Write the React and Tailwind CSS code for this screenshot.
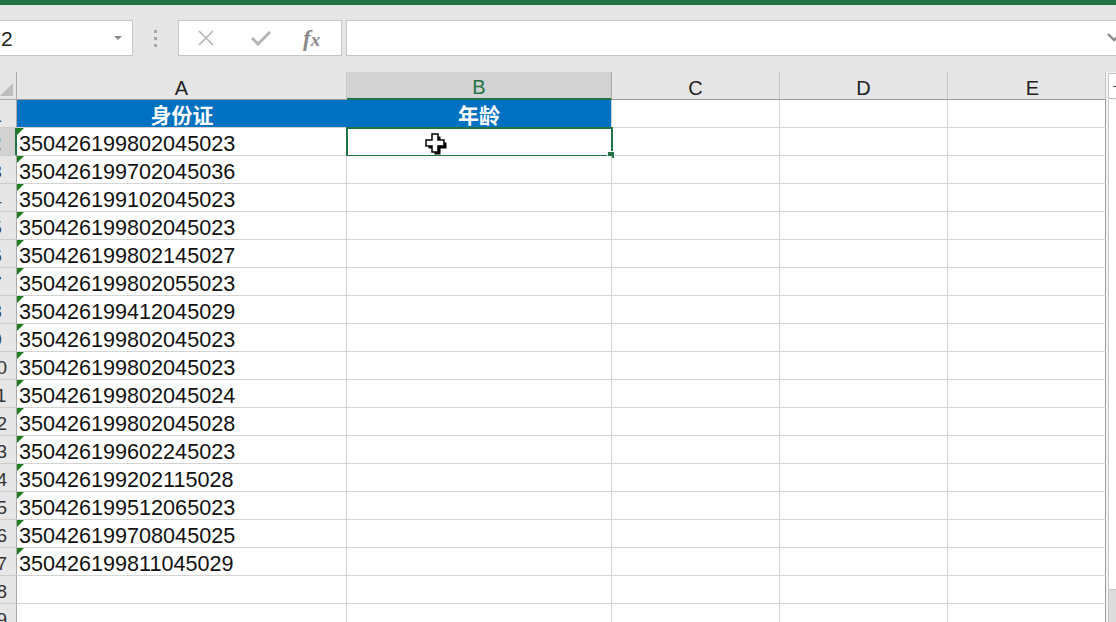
import React from 'react';

const ids = [
  '350426199802045023',
  '350426199702045036',
  '350426199102045023',
  '350426199802045023',
  '350426199802145027',
  '350426199802055023',
  '350426199412045029',
  '350426199802045023',
  '350426199802045023',
  '350426199802045024',
  '350426199802045028',
  '350426199602245023',
  '350426199202115028',
  '350426199512065023',
  '350426199708045025',
  '350426199811045029',
];

const sans = "font-['Liberation_Sans',Arial,sans-serif]";
const cjk = "font-['Noto_Sans_CJK_SC','Liberation_Sans',sans-serif]";

function FormulaBar() {
  return (
    <div className="flex h-[36px] mt-[15px] items-stretch">
      <div className="-ml-[24px] w-[157px] bg-white border border-[#c6c6c6] flex items-center justify-between pl-[10px] pr-[10px]">
        <span className={`${sans} text-[21px] leading-none text-[#222]`}>B2</span>
        <svg width="8" height="5" viewBox="0 0 8 5">
          <path d="M0 0h8L4 4z" fill="#8a8a8a" />
        </svg>
      </div>
      <div className="w-[45px] flex flex-col items-center justify-center gap-[4px]">
        <span className="w-[3px] h-[3px] bg-[#a6a6a6]" />
        <span className="w-[3px] h-[3px] bg-[#a6a6a6]" />
        <span className="w-[3px] h-[3px] bg-[#a6a6a6]" />
      </div>
      <div className="w-[164px] bg-white border border-[#c6c6c6] flex items-center pl-[18px] gap-[36px]">
        <svg width="18" height="18" viewBox="0 0 18 18">
          <path d="M2 2l14 14M16 2L2 16" stroke="#b4b4b4" strokeWidth="1.6" />
        </svg>
        <svg width="20" height="16" viewBox="0 0 20 16">
          <path d="M1 8l6 6L19 2" stroke="#b4b4b4" strokeWidth="3" fill="none" />
        </svg>
        <span className="font-['Liberation_Serif',serif] italic font-bold text-[23px] leading-none text-[#8a8a8a] -ml-[4px]">
          f<span className="text-[19px]">x</span>
        </span>
      </div>
      <div className="ml-[4px] flex-1 -mr-[20px] bg-white border border-[#c6c6c6] relative">
        <svg className="absolute left-[760px] top-[12px]" width="14" height="9" viewBox="0 0 14 9">
          <path d="M1 1l6 6 6-6" stroke="#8a8a8a" strokeWidth="2.4" fill="none" />
        </svg>
      </div>
    </div>
  );
}

const cols = [
  { key: 'A', w: 'w-[330px]' },
  { key: 'B', w: 'w-[265px]' },
  { key: 'C', w: 'w-[168px]' },
  { key: 'D', w: 'w-[168px]' },
  { key: 'E', w: 'w-[158px] pl-[12px]' },
];

function HeaderRow() {
  return (
    <div className="flex h-[28px]">
      <div className="w-[41px] h-[28px] border-r border-b border-[#ababab] bg-[#e6e6e6] flex items-end justify-end">
        <svg width="13" height="13" viewBox="0 0 13 13" className="mb-[3px] mr-[3px]">
          <path d="M13 0V13H0z" fill="#bdbdbd" />
        </svg>
      </div>
      {cols.map((c) =>
        c.key === 'B' ? (
          <div
            key={c.key}
            className={`${c.w} h-[28px] bg-[#d2d2d2] border-r border-[#ababab] border-b-2 border-b-[#217346] flex items-end justify-center ${sans} text-[20px] leading-[21px] text-[#217346]`}
          >
            B
          </div>
        ) : (
          <div
            key={c.key}
            className={`${c.w} h-[28px] border-r border-b border-r-[#c6c6c6] border-b-[#9b9b9b] flex items-end justify-center ${sans} text-[20px] leading-[22px] text-[#222] ${c.key === 'E' ? 'border-r-[#9b9b9b]' : ''}`}
          >
            {c.key}
          </div>
        )
      )}
    </div>
  );
}

function RowHead({ n, selected }) {
  return (
    <div
      className={`w-[41px] h-[28px] border-b border-[#cdcdcd] flex items-end justify-center ${sans} text-[19px] leading-[23px] text-[#333] ${
        selected ? 'bg-[#d2d2d2] border-r-2 border-r-[#217346]' : 'bg-[#e6e6e6] border-r border-r-[#ababab]'
      }`}
    >
      <span className="pl-[1px]">{n}</span>
    </div>
  );
}

const cell = 'h-[28px] border-r border-b border-[#d4d4d4] bg-white';

function DataRow({ n, value }) {
  return (
    <div className="flex h-[28px]">
      <RowHead n={n} selected={n === 2} />
      <div className={`w-[330px] ${cell} relative pl-[2px] pt-[2px] ${sans} text-[21.6px] leading-[27px] text-[#111] whitespace-nowrap`}>
        {value && (
          <span className="absolute left-0 top-0 w-0 h-0 border-t-[7px] border-r-[7px] border-t-[#1b7a1b] border-r-transparent" />
        )}
        {value}
      </div>
      <div className={`w-[265px] ${cell} relative`}>
        {n === 2 && (
          <>
            <div className="absolute -left-[1px] -top-[1px] w-[267px] h-[30px] border-2 border-[#217346]" />
            <div className="absolute -right-[4px] -bottom-[4px] w-[6px] h-[6px] bg-[#217346] border border-white box-content" />
          </>
        )}
      </div>
      <div className={`w-[168px] ${cell}`} />
      <div className={`w-[168px] ${cell}`} />
      <div className={`w-[158px] ${cell} border-r-[#9b9b9b]`} />
    </div>
  );
}

function TitleRow() {
  return (
    <div className="flex h-[28px]">
      <RowHead n={1} />
      <div className={`w-[330px] h-[28px] border-b border-[#d4d4d4] bg-[#0070c0] flex items-end justify-center ${cjk} font-bold text-[21px] leading-[26px] text-white`}>
        身份证
      </div>
      <div className={`w-[265px] h-[28px] border-r border-b border-[#d4d4d4] bg-[#0070c0] flex items-end justify-center ${cjk} font-bold text-[21px] leading-[26px] text-white`}>
        年龄
      </div>
      <div className={`w-[168px] ${cell}`} />
      <div className={`w-[168px] ${cell}`} />
      <div className={`w-[158px] ${cell} border-r-[#9b9b9b]`} />
    </div>
  );
}

function ScrollStrip() {
  return (
    <div className="w-[12px] flex flex-col pl-[2px] bg-[#f3f3f3]">
      <div className="h-[26px] mt-[1px] bg-white border border-[#c6c6c6] flex items-center pl-[4px]">
        <span className="w-[6px] h-[1px] bg-[#555]" />
      </div>
      <div className="flex-1 bg-white border-l border-[#c6c6c6] mt-[1px] flex flex-col justify-end">
        <div className="h-[33px] bg-[#dcdcdc] border-t border-[#c6c6c6]" />
      </div>
    </div>
  );
}

export default function App() {
  return (
    <div className={`w-[1116px] h-[622px] overflow-hidden bg-[#e6e6e6] relative ${sans}`}>
      <div className="h-[5px] bg-[#217346]" />
      <FormulaBar />
      <div className="flex mt-[16px] h-[550px]">
        <div className="-ml-[24px] flex flex-col">
          <HeaderRow />
          <TitleRow />
          {Array.from({ length: 18 }, (_, i) => (
            <DataRow key={i} n={i + 2} value={ids[i]} />
          ))}
        </div>
        <ScrollStrip />
      </div>
      <svg className="absolute left-[424px] top-[132px]" width="24" height="24" viewBox="0 0 24 24">
        <path d="M9 3h6v6h6v6h-6v6H9v-6H3V9h6z" fill="#000" transform="translate(1.5 1.5)" />
        <path d="M8 2h6v6h6v6h-6v6H8v-6H2V8h6z" fill="#fff" stroke="#000" strokeWidth="1.5" />
      </svg>
    </div>
  );
}
